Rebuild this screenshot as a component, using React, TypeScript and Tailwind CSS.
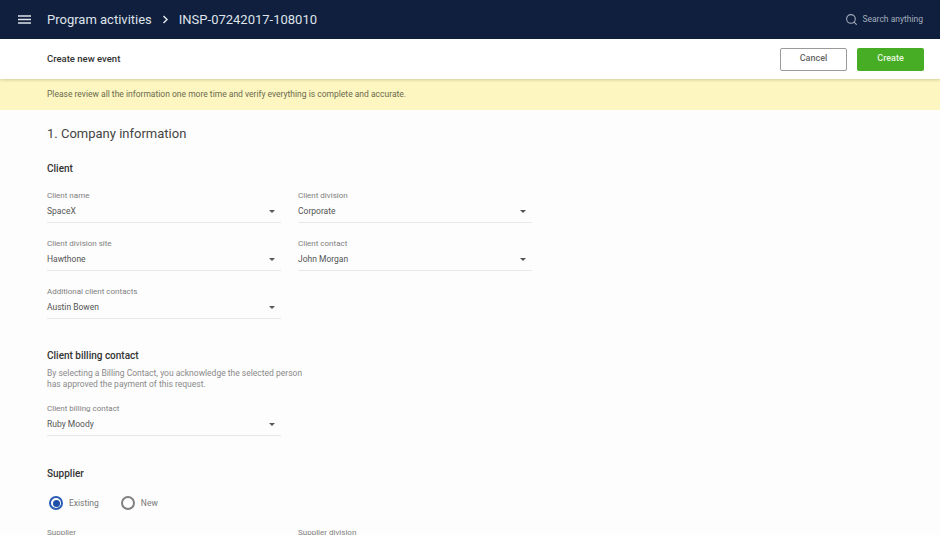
import { Search } from "lucide-react";

function Field({ label, value }: { label: string; value: string }) {
    return (
        <div className="w-[234px]">
            <div className="text-[8px] leading-[12px] text-[#808080]">{label}</div>
            <div className="mt-[2px] flex h-[19px] items-start justify-between border-b border-[#e8e8e8] pr-[6px]">
                <span className="text-[8.5px] leading-[15px] text-[#555]">{value}</span>
                <span className="mt-[6px] h-0 w-0 border-x-[3.5px] border-t-[3.5px] border-x-transparent border-t-[#555]" />
            </div>
        </div>
    );
}

function Radio({ label, on }: { label: string; on?: boolean }) {
    return (
        <div className="flex items-center gap-[6px]">
            <span
                className={
                    on
                        ? "flex h-[14px] w-[14px] items-center justify-center rounded-full border-2 border-[#2a5bb5]"
                        : "flex h-[14px] w-[14px] items-center justify-center rounded-full border-2 border-[#808080]"
                }
            >
                {on && <span className="h-[7px] w-[7px] rounded-full bg-[#1f50a8]" />}
            </span>
            <span className="text-[8.5px] leading-[12px] text-[#777]">{label}</span>
        </div>
    );
}

export default function App() {
    return (
        <div className="flex h-[535px] w-[940px] flex-col overflow-hidden bg-[#fdfdfd] font-['Roboto',sans-serif]">
            <header className="flex h-[39px] shrink-0 items-center bg-[#0f1f3d] pl-[18px] pr-[17px] text-[#dfe3ea]">
                <svg className="h-[9px] w-[13px]" viewBox="0 0 13 9" fill="none" stroke="currentColor" strokeWidth="1.5">
                    <path d="M0 1h13M0 4.5h13M0 8h13" />
                </svg>
                <span className="ml-[16px] text-[13px]">Program activities</span>
                <svg className="ml-[10px] h-[9px] w-[7px]" viewBox="0 0 7 9" fill="none" stroke="currentColor" strokeWidth="1.5">
                    <path d="M1.5 1l3.5 3.5L1.5 8" />
                </svg>
                <span className="ml-[10px] text-[13px]">INSP-07242017-108010</span>
                <div className="ml-auto flex items-center gap-[4px] text-[#a4adbd]">
                    <Search className="h-[13px] w-[13px]" />
                    <span className="text-[8.5px]">Search anything</span>
                </div>
            </header>
            <div className="z-10 flex h-[40px] shrink-0 items-center bg-white pl-[47px] pr-[16px] shadow-[0_1px_3px_rgba(0,0,0,0.18)]">
                <span className="text-[9.5px] font-medium text-[#333]">Create new event</span>
                <button className="ml-auto h-[23px] w-[67px] rounded-[2px] border border-[#9a9a9a] text-[9px] font-medium text-[#666]">Cancel</button>
                <button className="ml-[10px] h-[23px] w-[67px] rounded-[2px] bg-[#46ad24] text-[9px] font-medium text-[#e8f6e0]">Create</button>
            </div>
            <div className="flex h-[31px] shrink-0 items-center bg-[#fdf6c0] pl-[47px] text-[8.5px] text-[#6b6a50]">
                Please review all the information one more time and verify everything is complete and accurate.
            </div>
            <main className="pl-[47px]">
                <h1 className="mt-[14px] text-[13px] leading-[20px] text-[#444]">1. Company information</h1>
                <h2 className="mt-[18px] text-[10px] font-medium leading-[14px] text-[#333]">Client</h2>
                <div className="mt-[14px] grid w-[485px] grid-cols-[251px_234px] gap-y-[15px]">
                    <Field label="Client name" value="SpaceX" />
                    <Field label="Client division" value="Corporate" />
                    <Field label="Client division site" value="Hawthone" />
                    <Field label="Client contact" value="John Morgan" />
                    <Field label="Additional client contacts" value="Austin Bowen" />
                </div>
                <h2 className="mt-[30px] text-[10px] font-medium leading-[14px] text-[#333]">Client billing contact</h2>
                <p className="mt-[5px] w-[270px] text-[8.5px] leading-[11px] text-[#8a8a8a]">
                    By selecting a Billing Contact, you acknowledge the selected person has approved the payment of this request.
                </p>
                <div className="mt-[13px]">
                    <Field label="Client billing contact" value="Ruby Moody" />
                </div>
                <h2 className="mt-[31px] text-[10px] font-medium leading-[14px] text-[#333]">Supplier</h2>
                <div className="mt-[15px] flex items-center gap-[22px] pl-[2px]">
                    <Radio label="Existing" on />
                    <Radio label="New" />
                </div>
                <div className="mt-[17px] grid w-[485px] grid-cols-[251px_234px]">
                    <Field label="Supplier" value="" />
                    <Field label="Supplier division" value="" />
                </div>
            </main>
        </div>
    );
}
